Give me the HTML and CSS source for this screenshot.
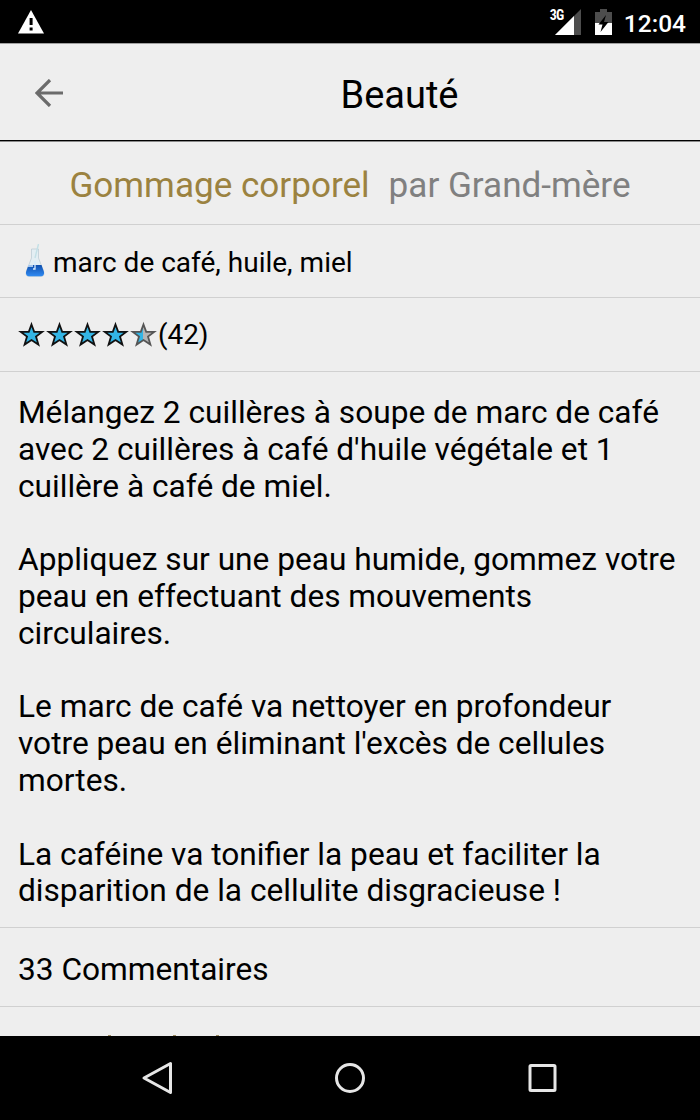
FILE: index.html
```html
<!DOCTYPE html>
<html lang="fr">
<head>
  <meta charset="UTF-8" />
  <meta name="viewport" content="width=device-width, initial-scale=1.0" />
  <title>Beauté</title>
  <link rel="stylesheet" href="styles.css">
</head>
<body>
  <svg class="defs" width="0" height="0">
    <defs>
      <linearGradient id="half">
        <stop offset="50%" stop-color="#33b5e5" />
        <stop offset="50%" stop-color="#b5b5b5" />
      </linearGradient>
      <linearGradient id="liquid" x1="0" x2="0" y1="0" y2="1">
        <stop offset="0" stop-color="#0f4fae" />
        <stop offset="1" stop-color="#2f8af2" />
      </linearGradient>
      <symbol id="star" viewBox="0 0 28 28">
        <path d="M13.500 3.500 L16.200 10.900 H24.200 L18 15.600 L20.400 23.600 L13.500 19 L6.600 23.600 L9 15.600 L2.800 10.900 H10.800 Z" stroke-width="1.800" />
      </symbol>
    </defs>
  </svg>

  <div class="status-bar">
    <svg class="warning" width="28" height="26" viewBox="0 0 28 26">
      <path d="M14 1 L27 24.500 H1 Z" fill="#fff" />
      <path d="M12.600 9 h3 v7 h-3 z M12.600 18.500 h3 v3 h-3 z" fill="#000" />
    </svg>
    <div class="status-right">
      <span class="network">3G</span>
      <svg class="signal" width="26" height="26" viewBox="0 0 26 26">
        <path d="M26 0 V26 H0 Z" fill="#4d4d4d" />
        <path d="M19 7 V26 H0 Z" fill="#fff" />
      </svg>
      <svg class="battery" width="17" height="26" viewBox="0 0 17 26">
        <path d="M5 0 h7 v3 h5 v11 H0 V3 h5 z" fill="#4d4d4d" />
        <path d="M0 14 h17 v12 H0 z" fill="#fff" />
        <path d="M11 6 L3.500 15.500 H7.500 L5.500 23 L13.500 13 H9 Z" fill="#000" />
      </svg>
      <span class="clock">12:04</span>
    </div>
  </div>

  <header class="header">
    <svg class="back" width="28" height="28" viewBox="0 0 28 28">
      <path d="M28 14 H2 M15 1 L2 14 L15 27" fill="none" stroke="#6b6b6b" stroke-width="3.200" />
    </svg>
    <h1>Beauté</h1>
  </header>

  <main class="content">
    <div class="row title">
      <span class="name">Gommage corporel</span>
      <span class="author">par Grand-mère</span>
    </div>

    <div class="row ingredients">
      <svg class="flask" width="20" height="34" viewBox="0 0 20 34">
        <path d="M6.500 5 H13.500 V14 L18.500 27 Q20 32.500 16 32.500 H4 Q0 32.500 1.500 27 L6.500 14 Z" fill="#e3eef3" stroke="#b9c8d2" stroke-width=".7" />
        <path d="M3.500 21 H16.500 L19 28 Q19.500 32 16 32.300 H4 Q.5 32 1 28 Z" fill="url(#liquid)" />
        <path d="M10 14 L13.500 0" stroke="#c3e0e6" stroke-width="1.400" />
        <path d="M10 17 V25 H8 M3 22 H8" fill="none" stroke="#d5ebff" stroke-width="1.300" />
      </svg>
      <span>marc de café, huile, miel</span>
    </div>

    <div class="row rating">
      <svg class="star"><use href="#star" /></svg>
      <svg class="star"><use href="#star" /></svg>
      <svg class="star"><use href="#star" /></svg>
      <svg class="star"><use href="#star" /></svg>
      <svg class="star star-half"><use href="#star" /></svg>
      <span>(42)</span>
    </div>

    <div class="row recipe">
      <p>Mélangez 2 cuillères à soupe de marc de café<br>avec 2 cuillères à café d'huile végétale et 1<br>cuillère à café de miel.</p>
      <p>Appliquez sur une peau humide, gommez votre<br>peau en effectuant des mouvements<br>circulaires.</p>
      <p>Le marc de café va nettoyer en profondeur<br>votre peau en éliminant l'excès de cellules<br>mortes.</p>
      <p>La caféine va tonifier la peau et faciliter la<br>disparition de la cellulite disgracieuse !</p>
    </div>

    <div class="row comments">33 Commentaires</div>
    <div class="next"><i></i><i></i><i></i></div>
  </main>

  <nav class="nav-bar">
    <svg width="36" height="36" viewBox="0 0 36 36"><path d="M31.500 3.500 V32.500 L5 18 Z" /></svg>
    <svg width="36" height="36" viewBox="0 0 36 36"><circle cx="18" cy="18" r="13.500" /></svg>
    <svg width="36" height="36" viewBox="0 0 36 36"><rect x="5" y="5.500" width="25" height="25" rx="1" /></svg>
  </nav>
</body>
</html>
```
FILE: styles.css
```css
* {
  box-sizing: border-box;
}

body {
  margin: 0;
  width: 700px;
  height: 1120px;
  display: flex;
  flex-direction: column;
  background: #eee;
  font-family: Roboto, sans-serif;
  color: #000;
  overflow: hidden;
}

svg {
  display: block;
  flex: none;
}

.defs {
  position: absolute;
}

/* Status bar */
.status-bar {
  height: 44px;
  flex: none;
  display: flex;
  justify-content: space-between;
  background: #000;
  border-bottom: 1px solid #a0a0a0;
  color: #fff;
  padding: 9px 14px 0 17px;
}

.status-right {
  display: flex;
}

.network {
  font-family: "Roboto Condensed", Roboto, sans-serif;
  width: 16px;
  font-size: 14px;
  line-height: 13px;
  font-weight: 700;
  letter-spacing: -1px;
  margin-right: -11px;
  z-index: 1;
}

.battery {
  margin-left: 14px;
}

.clock {
  font-size: 24.5px;
  line-height: 29px;
  font-weight: 500;
  margin-left: 12px;
}

/* Header */
.header {
  height: 97px;
  flex: none;
  display: flex;
  align-items: center;
  border-bottom: 1px solid #000;
  box-shadow: 0 1px #8a8a8a;
  padding: 1px 0 0 35px;
}

.header h1 {
  margin: 4px 0 0;
  padding-left: 36px;
  flex: 1;
  text-align: center;
  font-size: 38px;
  font-weight: 400;
}

/* Rows */
.content {
  flex: 1;
  min-height: 0;
  padding-top: 1px;
  overflow: hidden;
}

.row {
  display: flex;
  align-items: center;
  border-bottom: 1px solid #d0d0d0;
  padding: 0 18px;
}

.title {
  height: 83px;
  padding-top: 4px;
  justify-content: center;
  gap: 19px;
  font-size: 35.1px;
}

.name {
  color: #9b8240;
}

.author {
  color: #808080;
}

.ingredients {
  height: 73px;
  padding: 3px 18px 0 25px;
  font-size: 28px;
  gap: 8px;
}

.flask {
  margin-top: -4px;
}

.rating {
  height: 74px;
  font-size: 27.8px;
}

.star {
  width: 28px;
  height: 28px;
  fill: #33b5e5;
  stroke: #111;
}

.star-half {
  fill: url(#half);
  stroke: #555;
}

.recipe {
  display: block;
  height: 556px;
  padding-top: 23px;
  font-size: 31.65px;
  line-height: 36.8px;
  white-space: nowrap;
}

.recipe p {
  margin: 0 0 36.8px;
}

.comments {
  height: 79px;
  padding-top: 4px;
  font-size: 31.65px;
}

.next {
  height: 29px;
  display: flex;
  align-items: flex-end;
  padding-left: 108px;
}

.next i {
  width: 3px;
  height: 1px;
  background: #9b8a60;
}

.next i:nth-child(2) {
  margin-left: 62px;
}

.next i:nth-child(3) {
  margin-left: 40px;
}

/* Navigation bar */
.nav-bar {
  height: 84px;
  flex: none;
  display: flex;
  justify-content: center;
  align-items: center;
  gap: 157px;
  background: #000;
}

.nav-bar svg {
  fill: none;
  stroke: #e6e6e6;
  stroke-width: 3;
  stroke-linejoin: round;
}
```
